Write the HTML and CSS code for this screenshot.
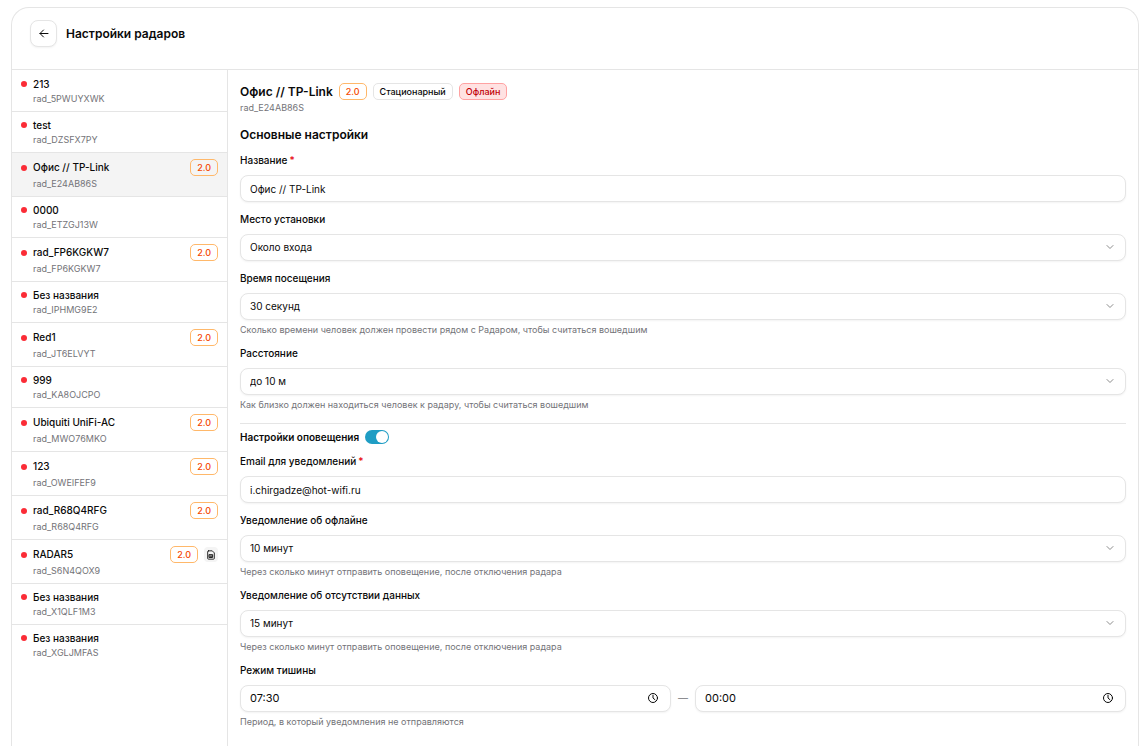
FILE: index.html
```html
<!DOCTYPE html>
<html lang="ru">
<head>
<meta charset="utf-8">
<meta name="viewport" content="width=device-width, initial-scale=1">
<title>Настройки радаров</title>
<link rel="stylesheet" href="styles.css">
</head>
<body>
<svg class="sprite" aria-hidden="true">
  <symbol id="chevron" viewBox="0 0 24 24"><path d="m6 9 6 6 6-6"/></symbol>
  <symbol id="clock" viewBox="0 0 24 24"><circle cx="12" cy="12" r="9"/><path d="M12 6.5V12l4 3.5"/></symbol>
</svg>
<div class="card">
  <header class="card-header">
    <button class="back" type="button" aria-label="Назад">
      <svg class="icon" viewBox="0 0 24 24"><path d="m11 18-7-7 7-7M20 11H4"/></svg>
    </button>
    <h1 class="page-title">Настройки радаров</h1>
  </header>
  <div class="layout">
    <nav class="radars" aria-label="Радары">
      <a class="radar" href="#"><span class="radar-top"><span class="radar-name">213</span></span><span class="radar-id">rad_5PWUYXWK</span></a>
      <a class="radar" href="#"><span class="radar-top"><span class="radar-name">test</span></span><span class="radar-id">rad_DZSFX7PY</span></a>
      <a class="radar tagged active" href="#" aria-current="page"><span class="radar-top"><span class="radar-name">Офис // TP-Link</span><span class="badge version">2.0</span></span><span class="radar-id">rad_E24AB86S</span></a>
      <a class="radar" href="#"><span class="radar-top"><span class="radar-name">0000</span></span><span class="radar-id">rad_ETZGJ13W</span></a>
      <a class="radar tagged" href="#"><span class="radar-top"><span class="radar-name">rad_FP6KGKW7</span><span class="badge version">2.0</span></span><span class="radar-id">rad_FP6KGKW7</span></a>
      <a class="radar" href="#"><span class="radar-top"><span class="radar-name">Без названия</span></span><span class="radar-id">rad_IPHMG9E2</span></a>
      <a class="radar tagged" href="#"><span class="radar-top"><span class="radar-name">Red1</span><span class="badge version">2.0</span></span><span class="radar-id">rad_JT6ELVYT</span></a>
      <a class="radar" href="#"><span class="radar-top"><span class="radar-name">999</span></span><span class="radar-id">rad_KA8OJCPO</span></a>
      <a class="radar tagged" href="#"><span class="radar-top"><span class="radar-name">Ubiquiti UniFi-AC</span><span class="badge version">2.0</span></span><span class="radar-id">rad_MWO76MKO</span></a>
      <a class="radar tagged" href="#"><span class="radar-top"><span class="radar-name">123</span><span class="badge version">2.0</span></span><span class="radar-id">rad_OWEIFEF9</span></a>
      <a class="radar tagged" href="#"><span class="radar-top"><span class="radar-name">rad_R68Q4RFG</span><span class="badge version">2.0</span></span><span class="radar-id">rad_R68Q4RFG</span></a>
      <a class="radar tagged" href="#"><span class="radar-top"><span class="radar-name">RADAR5</span><span class="badge version">2.0</span><span class="sim"><svg class="sim-icon" viewBox="0 0 24 24"><path d="M6 2h9l5 5v13a2 2 0 0 1-2 2H6a2 2 0 0 1-2-2V4a2 2 0 0 1 2-2z"/><path d="M8 11h8v7H8zM8 14.5h8M12 14.5V18"/></svg></span></span><span class="radar-id">rad_S6N4QOX9</span></a>
      <a class="radar" href="#"><span class="radar-top"><span class="radar-name">Без названия</span></span><span class="radar-id">rad_X1QLF1M3</span></a>
      <a class="radar" href="#"><span class="radar-top"><span class="radar-name">Без названия</span></span><span class="radar-id">rad_XGLJMFAS</span></a>
    </nav>
    <main class="details">
      <div class="title-row">
        <h2 class="title">Офис // TP-Link</h2>
        <span class="badge version">2.0</span>
        <span class="badge">Стационарный</span>
        <span class="badge offline">Офлайн</span>
      </div>
      <p class="subtitle">rad_E24AB86S</p>
      <form class="form">
        <h3 class="section-title">Основные настройки</h3>
        <div class="field">
          <label class="label" for="name">Название<span class="required">*</span></label>
          <input class="control" id="name" type="text" value="Офис // TP-Link">
        </div>
        <div class="field">
          <label class="label" for="place">Место установки</label>
          <div class="control-box">
            <select class="control" id="place"><option>Около входа</option></select>
            <svg class="chevron"><use href="#chevron"/></svg>
          </div>
        </div>
        <div class="field">
          <label class="label" for="visit">Время посещения</label>
          <div class="control-box">
            <select class="control" id="visit"><option>30 секунд</option></select>
            <svg class="chevron"><use href="#chevron"/></svg>
          </div>
          <p class="hint">Сколько времени человек должен провести рядом с Радаром, чтобы считаться вошедшим</p>
        </div>
        <div class="field">
          <label class="label" for="distance">Расстояние</label>
          <div class="control-box">
            <select class="control" id="distance"><option>до 10 м</option></select>
            <svg class="chevron"><use href="#chevron"/></svg>
          </div>
          <p class="hint">Как близко должен находиться человек к радару, чтобы считаться вошедшим</p>
        </div>
        <div class="alerts">
          <label class="alerts-title" for="alerts">Настройки оповещения</label>
          <input class="switch" id="alerts" type="checkbox" role="switch" checked>
        </div>
        <div class="field">
          <label class="label" for="email">Email для уведомлений<span class="required">*</span></label>
          <input class="control" id="email" type="email" value="i.chirgadze@hot-wifi.ru">
        </div>
        <div class="field">
          <label class="label" for="offline">Уведомление об офлайне</label>
          <div class="control-box">
            <select class="control" id="offline"><option>10 минут</option></select>
            <svg class="chevron"><use href="#chevron"/></svg>
          </div>
          <p class="hint">Через сколько минут отправить оповещение, после отключения радара</p>
        </div>
        <div class="field">
          <label class="label" for="nodata">Уведомление об отсутствии данных</label>
          <div class="control-box">
            <select class="control" id="nodata"><option>15 минут</option></select>
            <svg class="chevron"><use href="#chevron"/></svg>
          </div>
          <p class="hint">Через сколько минут отправить оповещение, после отключения радара</p>
        </div>
        <div class="field">
          <label class="label" for="quiet-from">Режим тишины</label>
          <div class="range">
            <div class="control-box">
              <input class="control time" id="quiet-from" type="text" inputmode="numeric" value="07:30">
              <svg class="clock"><use href="#clock"/></svg>
            </div>
            <span class="dash">—</span>
            <div class="control-box">
              <input class="control time" id="quiet-to" type="text" inputmode="numeric" value="00:00" aria-label="Окончание режима тишины">
              <svg class="clock"><use href="#clock"/></svg>
            </div>
          </div>
          <p class="hint">Период, в который уведомления не отправляются</p>
        </div>
      </form>
    </main>
  </div>
</div>
</body>
</html>
```
FILE: styles.css
```css
* {
  box-sizing: border-box;
}

body {
  display: flex;
  flex-direction: column;
  min-height: 100vh;
  margin: 0;
  padding: 7px 7px 0 11px;
  background: #fff;
  color: #0a0a0a;
  font: 10px/15px Inter, "Liberation Sans", sans-serif;
}

h1, h2, h3, p {
  margin: 0;
}

svg {
  fill: none;
  stroke: currentColor;
  stroke-linecap: round;
  stroke-linejoin: round;
}

.sprite {
  position: absolute;
  width: 0;
  height: 0;
}

.card {
  display: flex;
  flex: 1;
  flex-direction: column;
  border: 1px solid #e5e5e5;
  border-bottom: 0;
  border-radius: 18px 18px 0 0;
}

.card-header {
  display: flex;
  align-items: center;
  gap: 9px;
  padding: 12px 18px 22px;
  border-bottom: 1px solid #e5e5e5;
}

.back {
  display: grid;
  place-items: center;
  width: 27px;
  height: 27px;
  padding: 0;
  border: 1px solid #e5e5e5;
  border-radius: 8px;
  background: #fff;
  color: #0a0a0a;
  box-shadow: 0 1px 2px #0000000d;
}

.icon {
  width: 12px;
  height: 12px;
  stroke-width: 2;
}

.page-title,
.title,
.section-title {
  font-size: 12px;
  font-weight: 600;
  line-height: 17px;
}

.layout {
  display: flex;
  flex: 1;
}

.radars {
  flex: none;
  width: 216px;
  padding-top: 1px;
  border-right: 1px solid #e5e5e5;
}

.radar {
  display: block;
  padding: 5px 9px 6px;
  border-bottom: 1px solid #e5e5e5;
  color: inherit;
  text-decoration: none;
}

.radar:last-child {
  border-bottom: 0;
}

.radar.active {
  background: #f4f4f4;
}

.radar-top {
  display: flex;
  align-items: center;
  gap: 6px;
  height: 16px;
}

.tagged .radar-top {
  height: 19px;
}

.radar-top::before {
  flex: none;
  width: 6px;
  height: 6px;
  border-radius: 50%;
  background: #fb2c36;
  content: "";
}

.radar-name {
  flex: 1;
  font-weight: 500;
}

.radar-id,
.subtitle,
.hint {
  color: #737378;
  font-size: 9px;
  line-height: 12px;
}

.radar-id {
  display: block;
  padding: 1px 0 0 12px;
}

.badge {
  padding: 0 6px;
  border: 1px solid #e5e5e5;
  border-radius: 5px;
  font-size: 9px;
  font-weight: 500;
  line-height: 15px;
}

.badge.version {
  border-color: #ffb86a;
  color: #f54900;
}

.badge.offline {
  border-color: #ffa2a2;
  background: #ffe2e2;
  color: #c10007;
}

.sim {
  display: grid;
  place-items: center;
  width: 14px;
  height: 15px;
  border-radius: 4px;
  background: #f4f4f4;
}

.sim-icon {
  width: 10px;
  height: 10px;
  stroke-width: 2;
}

.details {
  flex: 1;
  min-width: 0;
  padding: 12px;
}

.title-row {
  display: flex;
  align-items: center;
  gap: 6px;
  height: 18px;
}

.subtitle {
  padding-top: 2px;
}

.form {
  display: flex;
  flex-direction: column;
  gap: 10px;
  padding-top: 12px;
}

.label {
  display: block;
  margin-bottom: 7px;
  font-weight: 500;
}

.required {
  margin-left: 2px;
  color: #e7000b;
}

.control-box {
  position: relative;
  flex: 1;
}

.control {
  display: block;
  width: 100%;
  height: 27px;
  padding: 0 9px;
  border: 1px solid #e5e5e5;
  border-radius: 8px;
  appearance: none;
  background: #fff;
  color: inherit;
  font: inherit;
  box-shadow: 0 1px 2px #0000000d;
}

.control.time {
  padding-bottom: 2px;
  font-size: 11px;
}

.chevron,
.clock {
  position: absolute;
  top: 7px;
  right: 10px;
  width: 12px;
  height: 12px;
  color: #8c8c8c;
  stroke-width: 2;
  pointer-events: none;
}

.clock {
  right: 12px;
  color: #0a0a0a;
}

.hint {
  padding-top: 4px;
}

.alerts {
  display: flex;
  align-items: center;
  gap: 6px;
  margin-top: 2px;
  padding-top: 6px;
  border-top: 1px solid #e5e5e5;
}

.alerts-title {
  font-weight: 600;
  line-height: 14px;
}

.switch {
  display: flex;
  justify-content: flex-end;
  width: 24px;
  height: 14px;
  margin: 0;
  padding: 1px;
  border-radius: 7px;
  appearance: none;
  background: #1f9dc4;
}

.switch::before {
  width: 12px;
  height: 12px;
  border-radius: 50%;
  background: #fff;
  content: "";
}

.switch:not(:checked) {
  justify-content: flex-start;
  background: #e5e5e5;
}

.range {
  display: flex;
  align-items: center;
  gap: 7px;
}

.dash {
  color: #737378;
}
```
